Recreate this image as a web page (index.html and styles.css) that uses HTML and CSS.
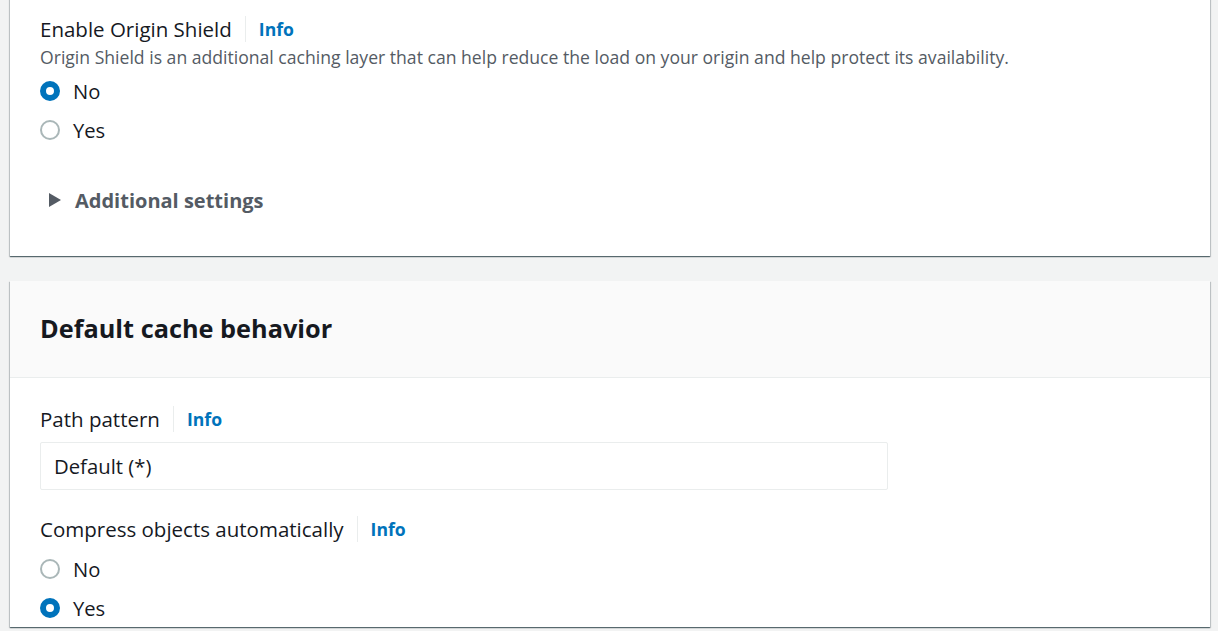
FILE: index.html
```html
<!DOCTYPE html>
<html lang="en">
<head>
<meta charset="utf-8">
<title>Distribution settings</title>
<link rel="stylesheet" href="styles.css">
</head>
<body>
<div class="page">
  <section class="card card-top">
    <div class="card-body">
      <div class="field">
        <div class="label-row">
          <span class="label">Enable Origin Shield</span>
          <span class="divider"></span>
          <a class="info">Info</a>
        </div>
        <p class="desc">Origin Shield is an additional caching layer that can help reduce the load on your origin and help protect its availability.</p>
        <div class="radio-group">
          <label class="radio"><span class="dot checked"></span><span class="radio-text">No</span></label>
          <label class="radio"><span class="dot"></span><span class="radio-text">Yes</span></label>
        </div>
      </div>
      <div class="expander">
        <svg class="caret" width="12" height="14" viewBox="0 0 12 14"><path d="M0 0 L12 7 L0 14 Z" fill="#545b64"/></svg>
        <span class="expander-text">Additional settings</span>
      </div>
    </div>
  </section>

  <section class="card card-second">
    <header class="card-header">
      <h2 class="heading">Default cache behavior</h2>
    </header>
    <div class="card-body body-second">
      <div class="field">
        <div class="label-row">
          <span class="label">Path pattern</span>
          <span class="divider"></span>
          <a class="info">Info</a>
        </div>
        <div class="input">Default (*)</div>
      </div>
      <div class="field field-compress">
        <div class="label-row">
          <span class="label">Compress objects automatically</span>
          <span class="divider"></span>
          <a class="info">Info</a>
        </div>
        <div class="radio-group radio-group-tight">
          <label class="radio"><span class="dot"></span><span class="radio-text">No</span></label>
          <label class="radio"><span class="dot checked"></span><span class="radio-text">Yes</span></label>
        </div>
      </div>
    </div>
  </section>
</div>
</body>
</html>
```

FILE: styles.css
```css
* { box-sizing: border-box; }
html, body {
  margin: 0;
  padding: 0;
  background: #f2f3f3;
  font-family: "Open Sans", "Noto Sans", Arial, sans-serif;
  color: #16191f;
  overflow: hidden;
}
.page {
  padding: 0 8px 40px 10px;
}
.card {
  background: #ffffff;
  box-shadow: 0 1px 1px 0 rgba(0, 28, 36, 0.5), 1px 1px 1px 0 rgba(0, 28, 36, 0.15), -1px 1px 1px 0 rgba(0, 28, 36, 0.15);
}
.card-top {
  margin-top: -10px;
}
.card-top .card-body {
  padding: 26px 30px 41px 30px;
}
.card-second {
  margin-top: 25px;
}
.card-header {
  background: #fafafa;
  border-bottom: 1px solid #eaeded;
  padding: 32px 30px 34px 30px;
}
.heading {
  margin: 0;
  font-size: 25.3px;
  line-height: 30px;
  font-weight: 700;
  color: #16191f;
}
.body-second {
  padding: 28px 30px 0 30px;
}
.label-row {
  display: flex;
  align-items: center;
  height: 26px;
}
.label {
  font-size: 20.5px;
  line-height: 26px;
  color: #16191f;
}
.divider {
  width: 1px;
  height: 26px;
  background: #eaeded;
  margin: 0 13px;
}
.info {
  font-size: 17.6px;
  font-weight: 700;
  color: #0073bb;
  line-height: 26px;
}
.desc {
  margin: 4px 0 0 0;
  font-size: 17.6px;
  line-height: 22px;
  color: #545b64;
}
.radio-group {
  margin-top: 3px;
  display: flex;
  flex-direction: column;
}
.radio-group-tight {
  margin-top: 7px;
}
.radio {
  display: flex;
  align-items: center;
  height: 39px;
}
.dot {
  width: 20px;
  height: 20px;
  border-radius: 50%;
  border: 2px solid #aab7b8;
  background: #ffffff;
  flex: none;
}
.dot.checked {
  border: 6px solid #0073bb;
  background: #ffffff;
}
.radio-text {
  margin-left: 13px;
  font-size: 20.2px;
  line-height: 26px;
  color: #16191f;
}
.expander {
  margin-top: 36px;
  display: flex;
  align-items: center;
  height: 30px;
  padding-left: 9px;
}
.caret {
  flex: none;
}
.expander-text {
  margin-left: 14px;
  font-size: 20px;
  font-weight: 700;
  color: #545b64;
}
.input {
  margin-top: 10px;
  width: 848px;
  height: 48px;
  border: 1px solid #eaeded;
  border-radius: 2px;
  padding: 0 13px;
  display: flex;
  align-items: center;
  font-size: 20.3px;
  color: #16191f;
}
.field-compress {
  margin-top: 26px;
}
```
